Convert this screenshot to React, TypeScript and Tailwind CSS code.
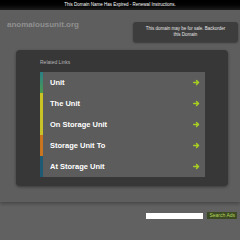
import React from 'react';

const links = [
  { label: 'Unit', bar: 'bg-gradient-to-b from-[#2a7f86] to-[#4c9a4a]' },
  { label: 'The Unit', bar: 'bg-[#c9c424]' },
  { label: 'On Storage Unit', bar: 'bg-[#c7c227]' },
  { label: 'Storage Unit To', bar: 'bg-[#c9741f]' },
  { label: 'At Storage Unit', bar: 'bg-[#1f5a74]' },
];

function Arrow() {
  return (
    <svg width="7" height="7" viewBox="0 0 10 10" className="shrink-0">
      <path d="M1 5h7M5 2l3 3-3 3" stroke="#a8d020" strokeWidth="2" fill="none" strokeLinecap="round" strokeLinejoin="round" />
    </svg>
  );
}

export default function App() {
  return (
    <div className="w-[240px] h-[240px] bg-[#616161] font-['Liberation_Sans',Arial,sans-serif] overflow-hidden">
      {/* expired banner */}
      <div className="h-[10px] bg-gradient-to-b from-[#000] to-[#1c1c1c] flex items-center justify-center text-[4.5px] text-white">
        This Domain Name Has Expired - Renewal Instructions.
      </div>

      <div className="bg-[#5e5e5e] pb-[16px] shadow-[0_2px_3px_rgba(0,0,0,0.25)]">
        {/* header */}
        <div className="flex items-start justify-between pl-[7px] pr-[2px] pt-[11px] h-[40px]">
          <div className="text-[8px] font-bold text-[#909090] leading-none">anomalousunit.org</div>
          <div className="mt-[1px] w-[105px] h-[20px] rounded-[3px] bg-[#3d3d3d] shadow-[0_1px_2px_rgba(0,0,0,0.4)] flex items-center justify-center text-center text-[4.5px] leading-[6px] text-[#e6e6e6] px-[10px]">
            This domain may be for sale. Backorder this Domain
          </div>
        </div>

        {/* panel */}
        <div className="ml-[16px] mr-[12px] rounded-[4px] bg-[#373737] shadow-[0_1px_3px_rgba(0,0,0,0.4)] pt-[10px] pb-[9px] pl-[24px] pr-[23px]">
          <div className="text-[5px] text-[#b5b5b5] mb-[7px] leading-none">Related Links</div>
          <div className="flex flex-col">
            {links.map((l) => (
              <div key={l.label} className="flex h-[21px] bg-[#5c5c5c]">
                <div className={`w-[3px] ${l.bar}`} />
                <div className="flex-1 flex items-center justify-between pl-[7px] pr-[5px]">
                  <span className="text-[7.5px] font-bold text-white">{l.label}</span>
                  <Arrow />
                </div>
              </div>
            ))}
          </div>
        </div>
      </div>

      {/* search */}
      <div className="flex justify-end items-center gap-[4px] pr-[3px] mt-[10px]">
        <div className="w-[57px] h-[6px] bg-white" />
        <div className="h-[7px] px-[2px] bg-[#3b4a23] text-[5px] leading-[7px] text-[#b5d25a]">Search Ads</div>
      </div>
    </div>
  );
}
